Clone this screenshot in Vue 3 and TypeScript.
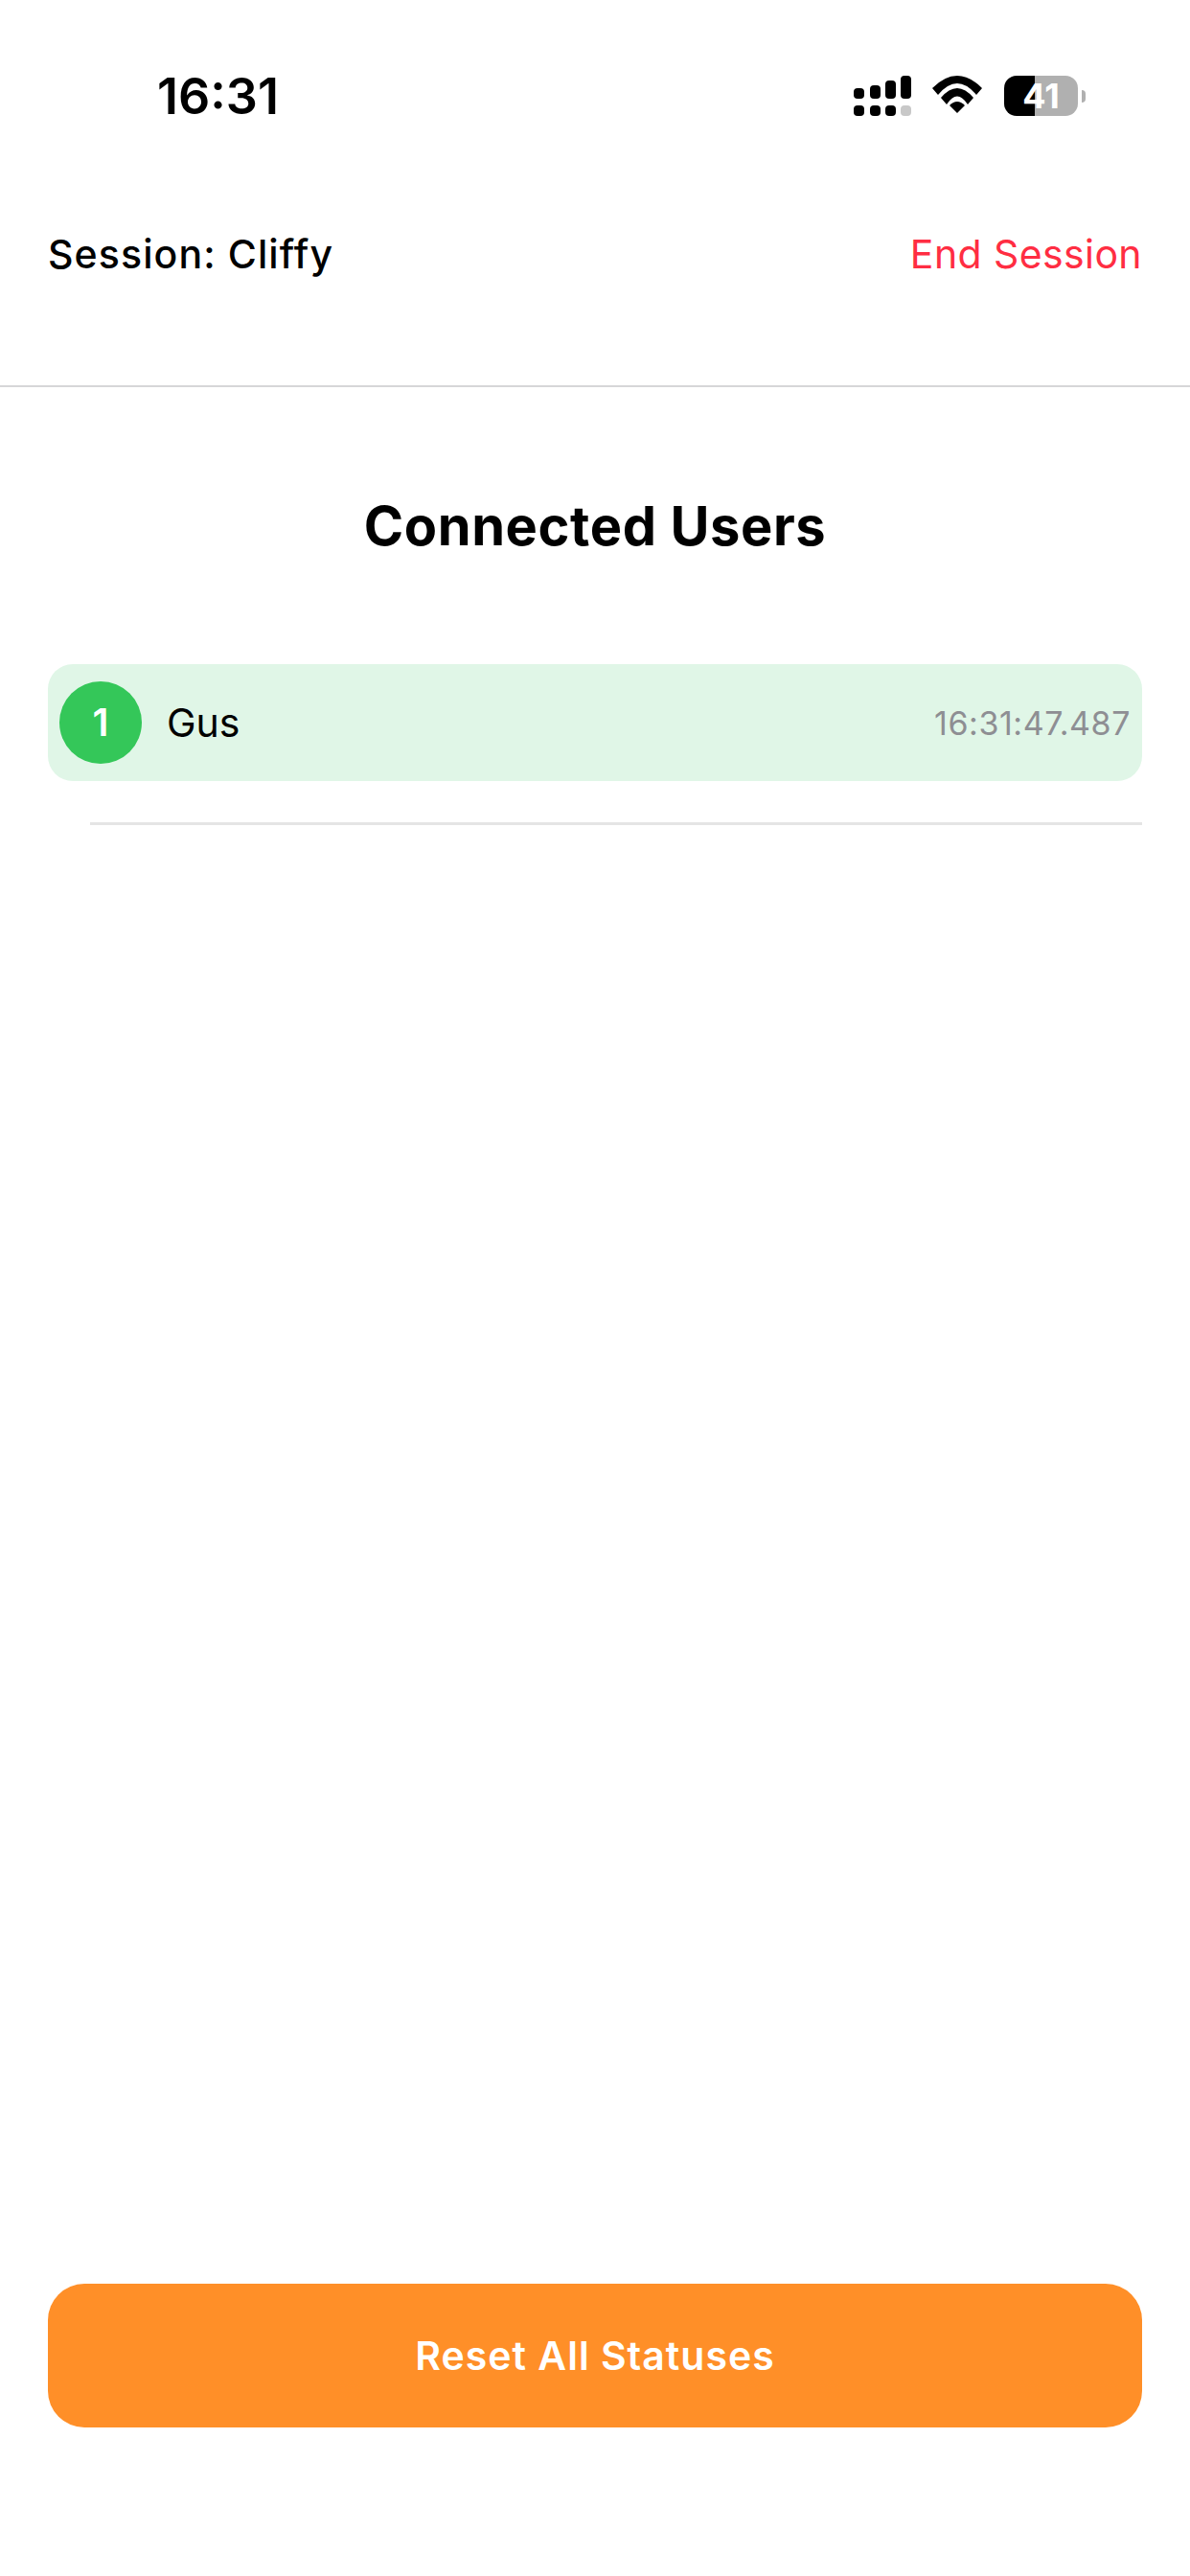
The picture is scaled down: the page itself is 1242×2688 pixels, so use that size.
<script setup lang="ts">
const topBars = [
  { x: 0, y: 13, h: 11 },
  { x: 17, y: 10, h: 14 },
  { x: 33, y: 5, h: 19 },
  { x: 49, y: 0, h: 24 },
]
const bottomBars = [
  { x: 0, fill: '#000' },
  { x: 17, fill: '#000' },
  { x: 33, fill: '#000' },
  { x: 49, fill: '#c8c8c8' },
]
</script>

<template>
  <div class="screen">
    <div class="status">
      <span class="clock">16:31</span>
      <div class="indicators">
        <svg class="signal" width="60" height="42" viewBox="0 0 60 42">
          <rect v-for="b in topBars" :key="b.x" :x="b.x" :y="b.y" width="11" :height="b.h" rx="4" fill="#000" />
          <rect v-for="b in bottomBars" :key="b.x" :x="b.x" y="31" width="11" height="11" rx="4" :fill="b.fill" />
        </svg>
        <svg class="wifi" width="52" height="40" viewBox="0 0 52 40">
          <path d="M0 13 Q26 -13 52 13 L46 20 Q26 -4 6 20 Z" fill="#000" />
          <path d="M9 23 Q26 3 43 23 L37 30 Q26 13 15 30 Z" fill="#000" />
          <path d="M26 39 L18 31 Q26 23 34 31 Z" fill="#000" />
        </svg>
        <div class="battery">
          <div class="cell">41</div>
          <div class="nub"></div>
        </div>
      </div>
    </div>

    <header class="bar">
      <span class="session">Session: Cliffy</span>
      <span class="end">End Session</span>
    </header>

    <main class="content">
      <h1 class="title">Connected Users</h1>
      <div class="row">
        <div class="rank">1</div>
        <span class="name">Gus</span>
        <span class="stamp">16:31:47.487</span>
      </div>
      <div class="rule"></div>
    </main>

    <div class="footer">
      <button class="reset" type="button">Reset All Statuses</button>
    </div>
  </div>
</template>

<style>
html, body { margin: 0; background: #fff; }
</style>

<style scoped>
.screen {
  width: 1242px;
  height: 2688px;
  display: flex;
  flex-direction: column;
  background: #fff;
  color: #000;
  font-family: Inter, "Liberation Sans", sans-serif;
}
.status {
  height: 200px;
  box-sizing: border-box;
  padding: 71px 109px 0 164px;
  display: flex;
  justify-content: space-between;
  align-items: flex-start;
}
.clock {
  font-size: 52px;
  line-height: 60px;
  font-weight: 600;
}
.indicators {
  display: flex;
  align-items: flex-start;
  padding-top: 8px;
}
.signal { margin-right: 22px; }
.wifi { margin-right: 23px; }
.battery {
  display: flex;
  align-items: center;
  gap: 4px;
}
.cell {
  width: 77px;
  height: 42px;
  border-radius: 13px;
  background: linear-gradient(to right, #000 42%, #b0b0b0 42%);
  color: #fff;
  font-size: 36px;
  font-weight: 700;
  line-height: 42px;
  text-align: center;
}
.nub {
  width: 4px;
  height: 13px;
  border-radius: 0 4px 4px 0;
  background: #b0b0b0;
}
.bar {
  height: 204px;
  box-sizing: border-box;
  padding: 40px 50px 0;
  display: flex;
  justify-content: space-between;
  align-items: flex-start;
  border-bottom: 2px solid #d6d6d8;
}
.session {
  font-size: 41px;
  line-height: 50px;
  font-weight: 500;
  letter-spacing: 1.1px;
}
.end {
  font-size: 41px;
  line-height: 50px;
  color: #ff2d42;
  letter-spacing: 0.4px;
}
.content {
  flex: 1;
  padding: 112px 50px 0;
}
.title {
  margin: 0 0 111px;
  font-size: 56px;
  line-height: 66px;
  font-weight: 700;
  text-align: center;
  letter-spacing: 0.6px;
}
.row {
  height: 122px;
  box-sizing: border-box;
  padding: 0 12px;
  display: flex;
  align-items: center;
  border-radius: 26px;
  background: #e0f6e7;
}
.rank {
  width: 86px;
  height: 86px;
  border-radius: 50%;
  background: #34c759;
  color: #fff;
  font-size: 40px;
  font-weight: 600;
  line-height: 86px;
  text-align: center;
}
.name {
  margin-left: 26px;
  font-size: 41px;
}
.stamp {
  margin-left: auto;
  font-size: 34px;
  color: #8e8e93;
  letter-spacing: 0.55px;
}
.rule {
  height: 3px;
  margin: 43px 0 0 44px;
  background: #e5e5e5;
}
.footer {
  padding: 0 50px 155px;
}
.reset {
  display: block;
  width: 100%;
  height: 150px;
  border: 0;
  border-radius: 38px;
  background: #ff8f28;
  color: #fff;
  font-family: inherit;
  font-size: 41px;
  font-weight: 600;
  letter-spacing: 1px;
}
</style>
